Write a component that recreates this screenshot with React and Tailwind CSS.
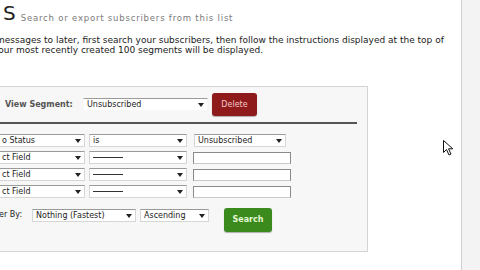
import React from "react";

function Sel({ w, text, cls = "" }) {
  return (
    <div
      className={`relative flex items-center h-[13px] bg-white border border-[#d6d6d6] border-t-[#9a9a9a] overflow-hidden ${cls}`}
      style={{ width: w }}
    >
      <span className="pl-[3px] text-[8px] leading-none text-[#222] whitespace-nowrap">{text}</span>
      <span className="absolute right-[3px] top-[4px] w-0 h-0 border-l-[3px] border-r-[3px] border-t-[4px] border-l-transparent border-r-transparent border-t-[#222]"></span>
    </div>
  );
}

function Inp({ w }) {
  return <div className="h-[12px] bg-white border border-[#8a8a8a] border-b-[#c9c9c9]" style={{ width: w }}></div>;
}

function Dash() {
  return <span className="inline-block w-[30px] h-px bg-[#333] align-middle mt-[1px]"></span>;
}

export default function App() {
  return (
    <div className="relative w-[480px] h-[270px] overflow-hidden bg-white flex font-['DejaVu_Sans',sans-serif]">
      <div className="w-[461px] flex flex-col overflow-hidden">
        <div className="flex items-end h-[23px] pl-[3px]">
          <span className="text-[20px] leading-none text-[#222]">S</span>
          <span className="ml-[5px] mb-[1px] text-[8.5px] leading-none text-[#7a7a7a] tracking-[0.8px]">Search or export subscribers from this list</span>
        </div>
        <div className="mt-[12px] -ml-[4px] text-[9px] leading-[10px] text-[#222] whitespace-nowrap">
          <div>messages to later, first search your subscribers, then follow the instructions displayed at the top of</div>
          <div className="-ml-[3px]">your most recently created 100 segments will be displayed.</div>
        </div>
        <div className="mt-[31px] w-[368px] h-[166px] bg-[#f7f7f7] border-t border-r border-b border-[#d4d4d4] flex flex-col">
          <div className="flex items-center h-[30px] pt-[5px]">
            <span className="pl-[5px] w-[83px] text-[8px] font-bold text-[#555] whitespace-nowrap">View Segment:</span>
            <Sel w="125px" text="Unsubscribed" cls="border-x-[#f7f7f7] border-b-[#f7f7f7]" />
            <button className="ml-[4px] w-[45px] h-[23px] rounded-[3px] bg-[#8e1a1c] text-[8px] text-[#f6c9c9] shadow-[0_1px_1px_rgba(0,0,0,0.3)]">Delete</button>
          </div>
          <div className="mt-[5px] w-[357px] h-[2px] bg-[#555]"></div>
          <div className="mt-[10px] flex flex-col gap-[4px]">
            <div className="flex items-center gap-[4px]">
              <Sel w="86px" text="o Status" cls="-ml-[1px] border-l-0" />
              <Sel w="98px" text="is" />
              <Sel w="92px" text="Unsubscribed" cls="ml-[3px]" />
            </div>
            {[0, 1, 2].map((i) => (
              <div key={i} className="flex items-center gap-[4px]">
                <Sel w="86px" text="ct Field" cls="-ml-[1px] border-l-0" />
                <Sel w="98px" text={<Dash />} />
                <div className="ml-[2px]"><Inp w="98px" /></div>
              </div>
            ))}
          </div>
          <div className="mt-[10px] flex items-start">
            <span className="mt-[3px] w-[33px] -ml-[1px] text-[8px] leading-none text-[#222] whitespace-nowrap">er By:</span>
            <Sel w="104px" text="Nothing (Fastest)" cls="mt-[1px]" />
            <Sel w="69px" text="Ascending" cls="mt-[1px] ml-[4px]" />
            <button className="ml-[15px] w-[48px] h-[24px] rounded-[3px] bg-[#3b8a1e] text-[8px] font-bold text-[#e4f7d4] shadow-[0_1px_1px_rgba(0,0,0,0.3)]">Search</button>
          </div>
        </div>
      </div>
      <div className="flex-1 border-l border-[#cfcfcf] bg-[#f3f3f3]"></div>
      <svg className="absolute left-[443px] top-[140px]" width="11" height="16" viewBox="0 0 11 16">
        <path d="M0.5 0.5 L0.5 12.5 L3.5 9.5 L6 15 L8 14 L5.5 8.8 L9.8 8.8 Z" fill="#fff" stroke="#111" strokeWidth="1" strokeLinejoin="round" />
      </svg>
    </div>
  );
}
